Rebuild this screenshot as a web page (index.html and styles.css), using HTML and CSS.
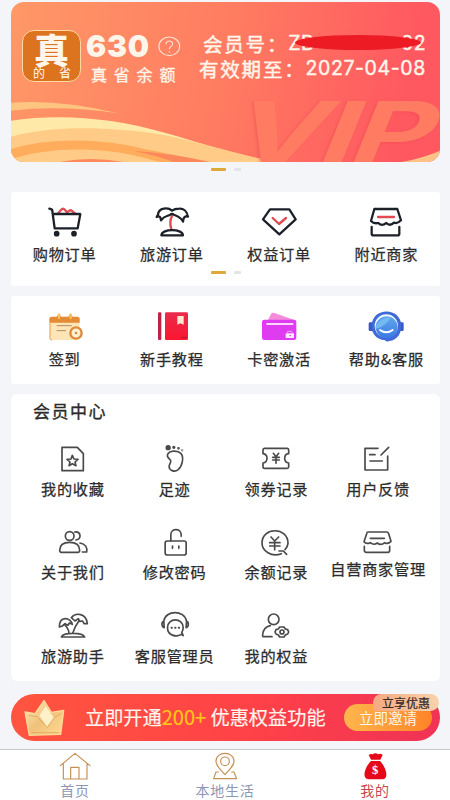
FILE: index.html
```html
<!DOCTYPE html>
<html lang="zh-CN">
<head>
<meta charset="utf-8">
<title>我的</title>
<link rel="stylesheet" href="styles.css">
</head>
<body>
<main class="page">
  <section class="vip">
    <svg class="vip-bg" viewBox="33 6 1287 480" preserveAspectRatio="none" aria-hidden="true">
      <path d="M33 308Q180 297 355 340Q180 315 33 332Z" fill="#fec581"/>
      <path d="M33 362C170 342 330 350 500 400C620 435 700 462 825 486H33Z" fill="#ffe9a8"/>
      <path d="M33 410C160 375 330 380 480 403C590 424 690 457 825 486H33Z" fill="#ffcb86"/>
      <path d="M33 447C150 412 300 415 430 446L630 486H33Z" fill="#ffac5c"/>
      <path d="M33 478C140 441 290 439 420 470L480 486H33Z" fill="#ffcb86"/>
      <path d="M400 453Q500 458 630 486H520Q470 466 400 453Z" fill="#fb885d"/>
      <path d="M180 486Q270 468 370 486Z" fill="#ff8860"/>
      <path d="M1205 486Q1270 474 1320 452V486Z" fill="#fec286"/>
    </svg>
    <div class="vip-word">VIP</div>
    <div class="logo"><b>真</b><span><i>的</i><i>省</i></span></div>
    <div class="balance">
      <div class="amount"><strong>630</strong>
        <svg width="23" height="21" viewBox="0 0 23 21" fill="none" stroke="#ffe3d2" stroke-width="1.1"><ellipse cx="11.3" cy="10.3" rx="10.4" ry="9.3"/><path d="M8 8.2C8 3.8 15 4 14.6 8C14.3 10.5 11.3 10.3 11.3 13.2M11.3 15v1.4"/></svg>
      </div>
      <div class="amount-label">真省余额</div>
    </div>
    <div class="member">
      <div class="line"><span>会员号：</span><div class="code"><span>ZB</span><span>02</span><div class="mask"></div></div></div>
      <div class="line"><span>有效期至：</span><span class="date">2027-04-08</span></div>
    </div>
  </section>
  <div class="pager"><i class="on"></i><i></i></div>

  <section class="panel orders">
    <div class="grid">
      <div class="item">
        <svg class="icon dark" viewBox="140 60 108 96"><path d="M174 84L184 73Q189 69 194 75L200 82L207 77Q211 74 215 78L224 85" stroke="#df4b50"/><path d="M147 71Q156 72 156 78L163 130H232L240 87H159"/><circle cx="169" cy="146" r="8.5" class="solid"/><circle cx="221" cy="146" r="8.5" class="solid"/></svg>
        <span>购物订单</span></div>
      <div class="item">
        <svg class="icon dark" viewBox="462 60 108 96"><path d="M516 93Q507 110 514 132" stroke="#df4b50" stroke-width="7"/><path d="M516 77C505 67 476 67 474 89L470 96C479 92 482 96 483 106C493 91 504 94 511 89Q516 84 521 89C530 92 543 96 549 110C550 98 554 92 564 95C561 77 549 70 538 71Q524 71 516 77Z"/><path d="M484 151C486 130 547 130 549 151Z"/></svg>
        <span>旅游订单</span></div>
      <div class="item">
        <svg class="icon dark" viewBox="108 60 108 96"><path d="M135 73H193L212 103L163 148L114 103Z"/><path d="M143 99L162 117L183 99" stroke="#df4b50" stroke-width="7"/></svg>
        <span>权益订单</span></div>
      <div class="item">
        <svg class="icon dark" viewBox="430 60 108 96"><path d="M449 72H518L529 106Q519 117 508 113Q496 125 485 114Q471 125 461 114Q447 117 439 108Z"/><path d="M441 126V146Q441 151 446 151H519Q524 151 524 146V126"/><path d="M460 96H508" stroke="#df4b50"/></svg>
        <span>附近商家</span></div>
    </div>
    <div class="pager"><i class="on"></i><i></i></div>
  </section>

  <section class="panel tools">
    <div class="grid">
      <div class="item">
        <svg class="icon" viewBox="140 60 108 96"><rect x="148" y="80" width="90" height="70" rx="8" fill="#ffe5b6"/><path d="M147 96V86Q147 80 155 80H169Q176 65 182 80H204Q211 65 217 80H230Q238 80 238 87V98H147Z" fill="#e58b35"/><path d="M176 73V84M211 73V84" stroke="#ffc25c" stroke-width="7" stroke-linecap="round"/><path d="M149 98V145Q149 150 155 150" fill="none" stroke="#eaa04e" stroke-width="3"/><path d="M169 107H214M169 122H197" stroke="#b68b62" stroke-width="3"/><circle cx="227" cy="129" r="17" fill="#fff0d0" stroke="#dc8939" stroke-width="7"/><circle cx="227" cy="129" r="4" fill="#dc8939"/></svg>
        <span>签到</span></div>
      <div class="item">
        <svg class="icon" viewBox="462 60 108 96"><defs><linearGradient id="book" x2="0" y2="1"><stop stop-color="#e92c4b"/><stop offset="1" stop-color="#fb1631"/></linearGradient></defs><rect x="474" y="67" width="10" height="83" rx="3" fill="#be2346"/><rect x="495" y="67" width="69" height="83" rx="4" fill="url(#book)"/><path d="M532 78H551V104L541 100L532 104Z" fill="#ffe9ce"/><path d="M544 142H560" stroke="#9e2033" stroke-width="3"/></svg>
        <span>新手教程</span></div>
      <div class="item">
        <svg class="icon" viewBox="108 60 108 96"><path d="M128 92L138 72Q141 67 148 69L211 91Z" fill="#f58cdb"/><rect x="111" y="89" width="103" height="61" rx="7" fill="#df3cf1"/><path d="M124 102H205" stroke="#ffd6fb" stroke-width="6"/><path d="M188 131V124H201V131" fill="none" stroke="#d7a5f6" stroke-width="3"/><rect x="182" y="130" width="25" height="14" fill="#ffeaff"/><path d="M193 137H198" stroke="#c84bd6" stroke-width="3"/></svg>
        <span>卡密激活</span></div>
      <div class="item">
        <svg class="icon" viewBox="430 60 108 96"><defs><linearGradient id="face" x2="0" y2="1"><stop stop-color="#5fa9ee"/><stop offset="1" stop-color="#3c78e2"/></linearGradient></defs><rect x="432" y="97" width="105" height="26" rx="4" fill="#365ac9"/><path d="M441 108C441 50 530 50 530 108C530 140 507 153 493 153Q486 157 481 151C455 148 441 132 441 108Z" fill="#4169d8"/><circle cx="485" cy="108" r="35" fill="#f1f8ff"/><circle cx="486" cy="112" r="33" fill="url(#face)"/><path d="M453 108Q466 84 497 81Q488 107 453 117Z" fill="#74b9f2"/><path d="M466 120Q485 134 504 120" fill="none" stroke="#fff" stroke-width="6" stroke-linecap="round"/></svg>
        <span>帮助&amp;客服</span></div>
    </div>
  </section>

  <section class="panel center">
    <h2>会员中心</h2>
    <div class="grid">
      <div class="item">
        <svg class="icon line-icon" viewBox="165 39 108 96"><path d="M186 52H232L250 71V122H186ZM217 76L222 87L234 88L225 96L228 107L217 101L207 107L210 96L201 88L213 87Z"/></svg>
        <span>我的收藏</span></div>
      <div class="item">
        <svg class="icon line-icon" viewBox="470.5 39 108 96"><circle cx="504" cy="53" r="5.5" class="solid"/><circle cx="521" cy="52" r="2.5" class="solid"/><circle cx="535" cy="55" r="1.5" class="solid"/><circle cx="546" cy="61" r=".8" class="solid"/><path d="M502 74C507 61 532 60 543 71C552 83 546 109 534 119C523 128 506 121 507 109C507 101 515 97 511 91C507 84 499 82 502 74Z"/></svg>
        <span>足迹</span></div>
      <div class="item">
        <svg class="icon line-icon" viewBox="101 39 108 96"><path d="M120 55H189Q193 55 193 60V71C177 72 177 97 193 99V111Q193 115 188 115H121Q116 115 116 110V99C132 97 132 73 116 71V60Q116 55 120 55ZM147 70L155 80L163 70M145 82H165M145 90H165M155 81V100"/></svg>
        <span>领券记录</span></div>
      <div class="item">
        <svg class="icon line-icon" viewBox="407 39 108 96"><path d="M461 55H422V120H490V78M493 52L470 75M436 74H452M437 93H474"/></svg>
        <span>用户反馈</span></div>
      <div class="item">
        <svg class="icon line-icon" viewBox="165 291 108 96"><circle cx="209" cy="318" r="13"/><path d="M224 306C243 304 246 326 228 330M184 367Q179 367 179 361C179 345 190 337 209 337C228 337 239 345 239 361Q239 367 234 367ZM240 339C256 341 263 353 260 366H247"/></svg>
        <span>关于我们</span></div>
      <div class="item">
        <svg class="icon line-icon" viewBox="470.5 291 108 96"><rect x="495" y="333" width="63" height="42" rx="6"/><path d="M512 333V314C512 294 543 294 543 314V319M517 348V355M536 348V355"/></svg>
        <span>修改密码</span></div>
      <div class="item">
        <svg class="icon line-icon" viewBox="101 291 108 96"><path d="M171 371C141 382 113 363 113 339C113 290 191 290 191 340Q190 351 182 359M164 363H177L187 373M140 321L151 333L163 321M136 338H167M136 348H167M151 334V359"/></svg>
        <span>余额记录</span></div>
      <div class="item raised">
        <svg class="icon line-icon" viewBox="407 291 108 96"><path d="M431 306H487Q491 306 493 311L500 334Q491 344 481 338Q470 348 459 339Q448 347 438 338Q426 344 419 335L427 311Q428 306 431 306ZM438 325H480M420 349V361Q420 367 426 367H491Q496 367 496 361V349"/></svg>
        <span>自营商家管理</span></div>
      <div class="item">
        <svg class="icon line-icon" viewBox="165 60 108 96"><path d="M184 141C190 127 247 126 254 141ZM207 130Q207 119 195 105M218 130Q224 110 238 91M178 111C178 77 212 81 217 103L208 99L204 106L195 101L187 108ZM214 83C227 66 259 70 262 101L252 101L248 93L239 94L235 86L225 93Z"/></svg>
        <span>旅游助手</span></div>
      <div class="item">
        <svg class="icon line-icon" viewBox="470.5 60 108 96"><path d="M491 93C496 60 552 59 559 93M491 94C483 96 484 111 492 113ZM559 94C567 96 566 111 558 113ZM543 133C528 143 502 136 502 113C502 82 549 82 549 113Q549 121 545 127L549 137Z"/><path d="M514 113H515M525 113H526M536 113H537" stroke-width="6"/></svg>
        <span>客服管理员</span></div>
      <div class="item">
        <svg class="icon line-icon" viewBox="101 60 108 96"><circle cx="148" cy="88" r="16"/><path d="M143 140H117Q114 140 115 134C116 121 125 110 138 107M166 111H179L183 117L190 119L193 126L190 132L183 135L179 141H166L162 135L155 132L152 126L155 119L162 117Z"/><circle cx="173" cy="126" r="6"/></svg>
        <span>我的权益</span></div>
    </div>
  </section>

  <section class="banner">
    <svg class="crown" viewBox="66 38 132 114"><defs><linearGradient id="gold" x2="1" y2="1"><stop stop-color="#ffe9ba"/><stop offset=".5" stop-color="#f0c27a"/><stop offset="1" stop-color="#ffdc94"/></linearGradient></defs><path d="M75 77L105 82L132 43L154 78L191 72L182 144L88 147Z" fill="url(#gold)" stroke="#ffd99a" stroke-width="4" stroke-linejoin="round"/><path d="M118 88L137 59L162 94L142 122Z" fill="#fff0c9"/><path d="M85 87L111 91L142 123L162 94L182 83M94 139H178" fill="none" stroke="#d59b50" stroke-width="2"/></svg>
    <p>立即开通<em>200+</em> 优惠权益功能</p>
    <div class="invite">立即邀请</div>
    <div class="tip">立享优惠</div>
  </section>
</main>

<nav class="tabs">
  <div class="tab"><svg class="icon tab-icon" viewBox="171 198 108 96"><path d="M181 242L225 205L270 242M190 236V282H261V236M212 281V247H237V281"/></svg><span>首页</span></div>
  <div class="tab"><svg class="icon tab-icon" viewBox="621 198 108 96"><path d="M675 269C655 249 648 239 648 229C648 197 702 197 702 229C702 240 693 250 675 269ZM655 261H648L641 281H710L702 261H695"/><circle cx="675" cy="229" r="13"/></svg><span>本地生活</span></div>
  <div class="tab active"><svg class="icon" viewBox="396 198 108 96"><path d="M438 224L431 210Q437 205 443 208Q451 202 459 208Q467 204 473 210L466 224Z" fill="#e5091a"/><path d="M438 228H465C484 247 493 282 472 283H430C410 281 418 247 438 228Z" fill="#e5091a"/><text x="451" y="266" text-anchor="middle" class="coin">$</text></svg><span>我的</span></div>
</nav>
</body>
</html>
```

FILE: styles.css
```css
* { box-sizing: border-box; }
body {
  margin: 0;
  height: 800px;
  overflow: hidden;
  display: flex;
  flex-direction: column;
  background: #f4f5f8;
  color: #2b2b2b;
  font-family: "Noto Sans CJK SC", sans-serif;
}
.page { height: 749px; padding: 2px 10px 0 11px; }
i, em { font-style: normal; }

.vip {
  position: relative;
  display: flex;
  height: 160px;
  padding: 28px 0 0 11px;
  border-radius: 13px;
  overflow: hidden;
  background: linear-gradient(102deg, #ff9867 0%, #ff7b61 50%, #ff5860 90%);
  color: #fff5ea;
}
.vip-bg { position: absolute; inset: 0; width: 100%; height: 100%; }
.vip-word {
  position: absolute;
  left: 227px;
  top: 99px;
  font: 700 84px/62px Inter, sans-serif;
  letter-spacing: -3px;
  transform: skewX(-22deg) scaleX(1.49);
  transform-origin: 0 50%;
  color: #ff7c63;
  text-shadow: -1px 1px 2px rgba(225, 62, 72, .3);
}
.logo {
  position: relative;
  width: 59px;
  height: 52px;
  border: 1px solid #ffd9a5;
  border-radius: 12px;
  background: #dc741f;
  text-align: center;
  line-height: 1;
}
.logo b { display: block; height: 36px; font-size: 35px; font-weight: 900; line-height: 35px; }
.logo span { display: flex; justify-content: space-between; padding: 0 9px 0 10px; font-size: 12px; line-height: 12px; }
.balance { position: relative; width: 108px; padding-left: 5px; }
.amount { display: flex; align-items: center; gap: 8px; height: 32px; }
.amount strong { width: 64px; font: 900 30px/32px Inter, sans-serif; letter-spacing: .7px; white-space: nowrap; }
.amount svg { flex: none; }
.amount-label { padding-left: 5px; margin-top: -1px; font-size: 16px; line-height: 26px; letter-spacing: 6.8px; -webkit-text-stroke: .3px; white-space: nowrap; }
.member { position: relative; padding: 1px 0 0 10px; font-size: 19.5px; letter-spacing: 1.8px; -webkit-text-stroke: .45px; white-space: nowrap; }
.line { display: flex; height: 25px; line-height: 25px; }
.line:first-child { padding-left: 4px; }
.code { position: relative; display: flex; justify-content: space-between; width: 138px; font-family: Inter, sans-serif; letter-spacing: .5px; }
.mask { position: absolute; left: 7px; right: 5px; top: 4px; height: 15px; border-radius: 50%; background: #ed1c24; }
.date { font-family: Inter, sans-serif; letter-spacing: .6px; }

.pager { display: flex; justify-content: center; gap: 8px; height: 3px; margin-top: 5.5px; }
.pager i { width: 7px; height: 3px; border-radius: 1px; background: #e2e4e7; }
.pager .on { width: 15px; background: #dea936; }

.panel { background: #fff; border-radius: 3px; }
.grid { display: grid; grid-template-columns: repeat(4, 1fr); }
.item { display: flex; flex-direction: column; align-items: center; white-space: nowrap; font-size: 15.2px; line-height: 22px; letter-spacing: .8px; -webkit-text-stroke: .25px; }
.item span { margin-top: 4.5px; }
.icon { display: block; width: 36px; height: 32px; }
.dark, .line-icon, .tab-icon { fill: none; stroke-linecap: round; stroke-linejoin: round; }
.dark { stroke: #1c2028; stroke-width: 6.8; }
.dark .solid { fill: #1c2028; stroke: none; }
.line-icon { stroke: #4a4a4a; stroke-width: 5; }
.line-icon .solid { fill: #4a4a4a; }

.orders { height: 94px; margin-top: 21px; padding-top: 13.5px; }
.orders .pager { margin-top: 7.5px; }
.tools { height: 88px; margin-top: 10.5px; padding-top: 14px; }
.center { height: 287px; margin-top: 10px; padding: 5px 11px 0; border-radius: 6px; }
.center h2 { margin: 0 0 0 11px; height: 44px; font-size: 17px; line-height: 24px; font-weight: 400; letter-spacing: 1.5px; -webkit-text-stroke: .35px; }
.center .item { height: 83.5px; }
.center .item span { margin-top: 1.5px; }
.center .raised span { margin-top: -1.5px; }

.banner {
  position: relative;
  display: flex;
  align-items: center;
  height: 47px;
  margin-top: 13px;
  padding: 0 7px 0 11px;
  border-radius: 24px;
  background: linear-gradient(90deg, #ff553f, #ff4247 55%, #f13454 95%);
  color: #fff4eb;
}
.crown { width: 44px; height: 38px; }
.banner p { margin: -2px 0 0 19px; width: 259px; font-size: 19.2px; white-space: nowrap; -webkit-text-stroke: .2px; }
.banner em { font-size: 20px; color: #ffc716; }
.invite { width: 88px; height: 27px; border-radius: 14px; background: linear-gradient(90deg, #ffb64d, #ff8426); font-size: 14.5px; line-height: 28px; text-align: center; }
.tip { position: absolute; right: 1px; top: 0; width: 66px; height: 17px; border-radius: 9px 9px 9px 2px; background: linear-gradient(90deg, #f5a980, #f8d2ad); color: #35241f; font-size: 12px; line-height: 17px; text-align: center; -webkit-text-stroke: .2px; }

.tabs { display: grid; grid-template-columns: repeat(3, 1fr); height: 51px; border-top: 1px solid #c4c8ce; background: #fff; }
.tab { display: flex; flex-direction: column; align-items: center; padding-top: 1px; font-size: 14px; line-height: 15px; letter-spacing: .7px; color: #8d96b3; }
.tab-icon { stroke: #c69156; stroke-width: 3.5; }
.tab.active { color: #c54851; }
.coin { font: bold 38px "Liberation Serif", serif; fill: #fff; }
```
